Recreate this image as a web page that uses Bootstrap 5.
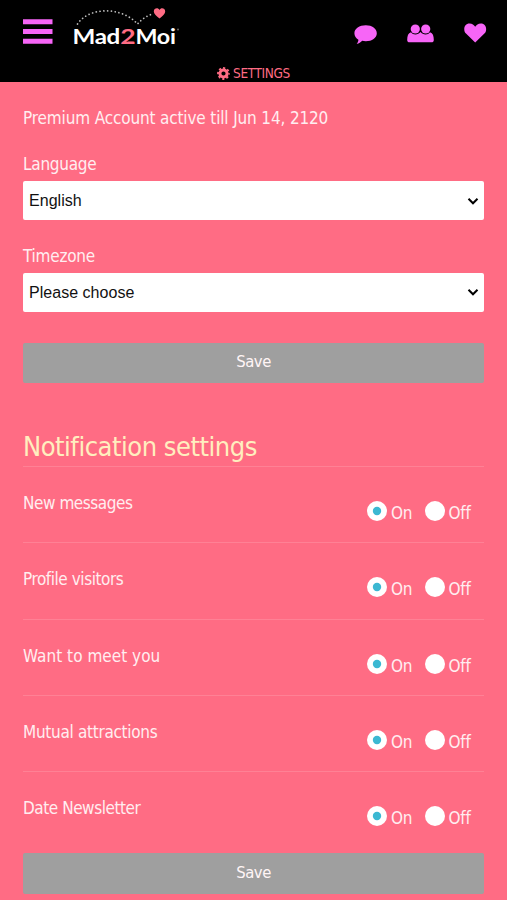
<!DOCTYPE html>
<html lang="en">
<head>
<meta charset="utf-8">
<meta name="viewport" content="width=device-width, initial-scale=1">
<title>Mad2Moi – Settings</title>
<link href="https://cdn.jsdelivr.net/npm/bootstrap@5.3.0/dist/css/bootstrap.min.css" rel="stylesheet">
<style>
body{background:#ff6c84;color:#ffeef0;font-family:"DejaVu Sans Condensed","DejaVu Sans",sans-serif;font-stretch:condensed;font-size:17px;line-height:24px;letter-spacing:-.3px;height:900px;overflow:hidden}
.topbar{height:82px;background:#000}
.topbar-main{height:64px;padding:0 20px 0 23px}
.menu-btn{width:29px;height:26px;margin-top:18px;color:#f765f7}
.menu-btn svg,.logo svg,.quick svg{display:block}
.logo{margin-left:20px}
.quick{margin-top:22px;gap:28px;color:#f765f7}
.page-title{color:#ff6c84;font-size:13.500px;line-height:18px;letter-spacing:-.35px;gap:3px}
.content{padding:0 23px}
.premium{padding-top:24px;height:70px;letter-spacing:-.15px}
.field{height:91.5px}
.field label{display:block;height:29px;letter-spacing:-.25px}
.field .form-select{height:39px;padding:0 30px 0 6px;border:0;border-radius:2px;color:#111;font:16px/39px "Liberation Sans",Arial,sans-serif;letter-spacing:.03px;background-color:#fff;background-position:right 5px center;background-size:12px 12px;background-image:url("data:image/svg+xml,%3Csvg xmlns='http://www.w3.org/2000/svg' viewBox='0 0 12 12'%3E%3Cpath d='M1.5 3.8 6 8.3l4.500-4.500' fill='none' stroke='%23000' stroke-width='2'/%3E%3C/svg%3E")}
.btn-save{--bs-btn-bg:#9f9f9f;--bs-btn-color:#fff5f6;--bs-btn-hover-bg:#8f8f8f;--bs-btn-hover-color:#fff;height:40.500px;padding:0;border:0;border-radius:2px;font-size:16.500px;letter-spacing:-.45px}
.save-account{margin-top:7.500px}
.save-notify{margin-top:6px}
.section-title{color:#ffeebf;font-size:27px;line-height:36px;letter-spacing:-.48px;margin:46px 0 0;height:37px;font-weight:400}
.setting{height:76.3px;border-top:1px solid #ff8195;padding:24px 13.500px 0 0}
.tight{letter-spacing:-.45px}
.loose{letter-spacing:.03px}
.options{padding-top:10px;gap:11.500px}
.options .form-check-input{width:20px;height:20px;margin:0 4px 0 0;border:0;background-color:#fff}
.options .form-check-input:checked{background-color:#fff;background-size:20px;background-image:url("data:image/svg+xml,%3Csvg xmlns='http://www.w3.org/2000/svg' viewBox='0 0 20 20'%3E%3Ccircle cx='10' cy='10' r='4.200' fill='%233bb8d2'/%3E%3C/svg%3E")}
.options label{letter-spacing:-.2px}
.options span{width:22px}
</style>
</head>
<body>
<header class="topbar">
  <div class="topbar-main d-flex align-items-start">
    <a class="menu-btn" href="#" aria-label="Menu"><svg width="30" height="27" viewBox="0 0 30 27" fill="currentColor"><path d="M0 1.200h29.500v5H0zM0 11h29.500v5H0zM0 20.800h29.500v5H0z"/></svg></a>
    <a class="logo" href="#" aria-label="Mad2Moi"><svg width="112" height="52" viewBox="72 0 112 52">
      <path d="M77.500 24C89 6.500 122 6.500 137.500 24 142 19 146 16.500 151 14.500" fill="none" stroke="#bbb" stroke-width="1.700" stroke-linecap="round" stroke-dasharray=".1 3.700"/>
      <path d="M159.500 18.500c-3-2.200-5.700-4.500-5.700-7 0-3.700 4.500-4 5.700-1.600 1.200-2.400 5.700-2.100 5.700 1.600 0 2.500-2.700 4.800-5.700 7z" fill="#ff6c84"/>
      <g font-family="Lato,sans-serif" font-size="21.500" font-weight="700" fill="#fff" lengthAdjust="spacingAndGlyphs">
        <text x="72.500" y="43.800" textLength="47.500" lengthAdjust="spacingAndGlyphs">Mad</text>
        <text x="120.200" y="43.800" textLength="15" lengthAdjust="spacingAndGlyphs" fill="#ff6c84">2</text>
        <text x="135.500" y="43.800" textLength="40" lengthAdjust="spacingAndGlyphs">Moi</text>
      </g>
      <circle cx="178" cy="29.500" r="1" fill="#666"/>
    </svg></a>
    <nav class="quick d-flex ms-auto">
      <a class="text-reset" href="#" aria-label="Messages"><svg width="26" height="24" viewBox="353 22 26 24" fill="currentColor"><path d="M365.800 25.200c6.200 0 11 3.500 11 8s-4.800 8-11 8c-1.300 0-2.500-.1-3.600-.4-1.500 1.500-3.200 2.700-5.500 3.200 1-1.200 1.600-2.500 1.700-4.300-2.400-1.500-4-3.800-4-6.500 0-4.500 5-8 11.400-8z"/></svg></a>
      <a class="text-reset" href="#" aria-label="Visitors"><svg width="28" height="24" viewBox="407 22 28 24" fill="currentColor"><circle cx="415.300" cy="29" r="4.600"/><circle cx="425.700" cy="29" r="4.600"/><path d="M411 32.200c1.200 1.500 2.600 2.200 4.300 2.200 2.200 0 4-1 5.200-2.500 1.200 1.500 3 2.500 5.200 2.500 1.700 0 3.100-.7 4.300-2.200 2.800.8 3.800 3.500 3.800 7.800 0 1.500-.9 2.300-2.300 2.300h-22c-1.400 0-2.300-.8-2.300-2.300 0-4.300 1-7 3.800-7.800z"/></svg></a>
      <a class="text-reset" href="#" aria-label="Matches"><svg width="24" height="24" viewBox="463 22 24 24" fill="currentColor"><path d="M475.200 42.500 466 33.600c-3.200-3.200-2-10 3.600-10 2.700 0 4.300 1.600 5.600 3.200 1.300-1.600 2.900-3.200 5.600-3.200 5.600 0 6.800 6.800 3.600 10z"/></svg></a>
    </nav>
  </div>
  <div class="page-title d-flex justify-content-center align-items-center"><svg width="13" height="13" viewBox="-6.500 -6.500 13 13" fill="none" stroke="currentColor"><circle r="3.600" stroke-width="3"/><circle r="5.500" stroke-width="1.800" stroke-dasharray="2.160 2.160" stroke-dashoffset="1.080"/></svg><span>SETTINGS</span></div>
</header>
<main class="content">
  <div class="premium">Premium Account active till Jun 14, 2120</div>
  <form>
    <div class="field"><label for="language">Language</label><select class="form-select" id="language"><option>English</option></select></div>
    <div class="field"><label for="timezone">Timezone</label><select class="form-select" id="timezone"><option>Please choose</option></select></div>
    <button class="btn btn-save save-account d-block w-100" type="button">Save</button>
  </form>
  <h2 class="section-title">Notification settings</h2>
  <form>
    <div class="setting d-flex justify-content-between"><div class="tight">New messages</div><div class="options d-flex"><label class="d-flex"><input class="form-check-input" type="radio" name="messages" checked><span>On</span></label><label class="d-flex"><input class="form-check-input" type="radio" name="messages"><span>Off</span></label></div></div>
    <div class="setting d-flex justify-content-between"><div class="tight">Profile visitors</div><div class="options d-flex"><label class="d-flex"><input class="form-check-input" type="radio" name="visitors" checked><span>On</span></label><label class="d-flex"><input class="form-check-input" type="radio" name="visitors"><span>Off</span></label></div></div>
    <div class="setting d-flex justify-content-between"><div class="loose">Want to meet you</div><div class="options d-flex"><label class="d-flex"><input class="form-check-input" type="radio" name="meet" checked><span>On</span></label><label class="d-flex"><input class="form-check-input" type="radio" name="meet"><span>Off</span></label></div></div>
    <div class="setting d-flex justify-content-between"><div>Mutual attractions</div><div class="options d-flex"><label class="d-flex"><input class="form-check-input" type="radio" name="mutual" checked><span>On</span></label><label class="d-flex"><input class="form-check-input" type="radio" name="mutual"><span>Off</span></label></div></div>
    <div class="setting d-flex justify-content-between"><div class="tight">Date Newsletter</div><div class="options d-flex"><label class="d-flex"><input class="form-check-input" type="radio" name="newsletter" checked><span>On</span></label><label class="d-flex"><input class="form-check-input" type="radio" name="newsletter"><span>Off</span></label></div></div>
    <button class="btn btn-save save-notify d-block w-100" type="button">Save</button>
  </form>
</main>
<script src="https://cdn.jsdelivr.net/npm/bootstrap@5.3.0/dist/js/bootstrap.bundle.min.js"></script>
</body>
</html>
